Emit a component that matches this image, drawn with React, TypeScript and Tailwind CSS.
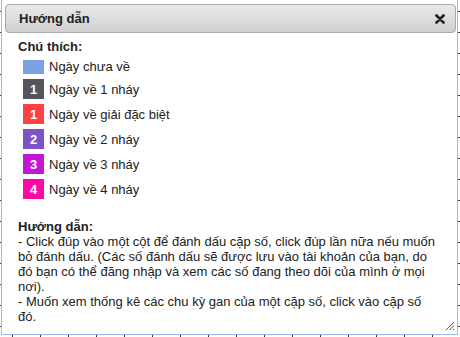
const legend = [
  { label: 'Ngày chưa về', num: '', color: 'bg-[#7ba3e1]', h: 'h-[14px]' },
  { label: 'Ngày về 1 nháy', num: '1', color: 'bg-[#55545f]', h: 'h-[20px]' },
  { label: 'Ngày về giải đặc biệt', num: '1', color: 'bg-[#fe4141]', h: 'h-[20px]' },
  { label: 'Ngày về 2 nháy', num: '2', color: 'bg-[#7d53c7]', h: 'h-[20px]' },
  { label: 'Ngày về 3 nháy', num: '3', color: 'bg-[#c317d8]', h: 'h-[20px]' },
  { label: 'Ngày về 4 nháy', num: '4', color: 'bg-[#fd0aa6]', h: 'h-[20px]' },
]

export default function App() {
  return (
    <div className="h-[337px] w-[460px] overflow-hidden bg-white bg-[linear-gradient(to_bottom,#333_1px,transparent_1px),linear-gradient(to_right,#333_1px,transparent_1px)] bg-[size:28px_21px] bg-[position:12px_11px] font-['Liberation_Sans',Arial,sans-serif] text-[13px] leading-[15px] text-[#222]">
      <div className="ml-px flex h-[335px] w-[457px] flex-col border-x border-b border-[#9bbbe7] bg-white pl-[3px] pr-px pt-[4px]">
        <div className="flex h-[29px] items-center justify-between rounded-[4px] border border-[#aaaaaa] bg-[linear-gradient(to_bottom,#e9e9e9,#d0d0d0)] pl-[13px] pr-[10px]">
          <span className="font-bold">Hướng dẫn</span>
          <svg width="10" height="10" viewBox="0 0 10 10" className="mt-px">
            <path d="M1.5 1.5 L8.5 8.5 M8.5 1.5 L1.5 8.5" stroke="#222" strokeWidth="2.6" strokeLinecap="round" />
          </svg>
        </div>

        <div className="relative flex-1 pl-[13px] pt-[6px]">
          <div className="font-bold">Chú thích:</div>
          <div className="mt-[5px] flex flex-col gap-[5px] pl-[5px]">
            {legend.map((item) => (
              <div key={item.label} className="flex items-center gap-[5px]">
                <span className={`flex w-[21px] items-center justify-center font-bold text-white ${item.color} ${item.h}`}>
                  {item.num}
                </span>
                <span>{item.label}</span>
              </div>
            ))}
          </div>

          <div className="mt-[20px] w-[418px]">
            <div className="font-bold">Hướng dẫn:</div>
            <div>
              - Click đúp vào một cột để đánh dấu cặp số, click đúp lần nữa nếu muốn bỏ đánh dấu. (Các số đánh dấu sẽ được lưu vào tài khoản của bạn, do đó bạn có thể đăng nhập và xem các số đang theo dõi của mình ở mọi nơi).
            </div>
            <div>- Muốn xem thống kê các chu kỳ gan của một cặp số, click vào cặp số đó.</div>
          </div>

          <svg width="10" height="10" viewBox="0 0 10 10" className="absolute bottom-[3px] right-[1px]">
            <path d="M9 1 L1 9 M9 4.5 L4.5 9 M9 8 L8 9" stroke="#555" strokeWidth="1" />
          </svg>
        </div>
      </div>
    </div>
  )
}
